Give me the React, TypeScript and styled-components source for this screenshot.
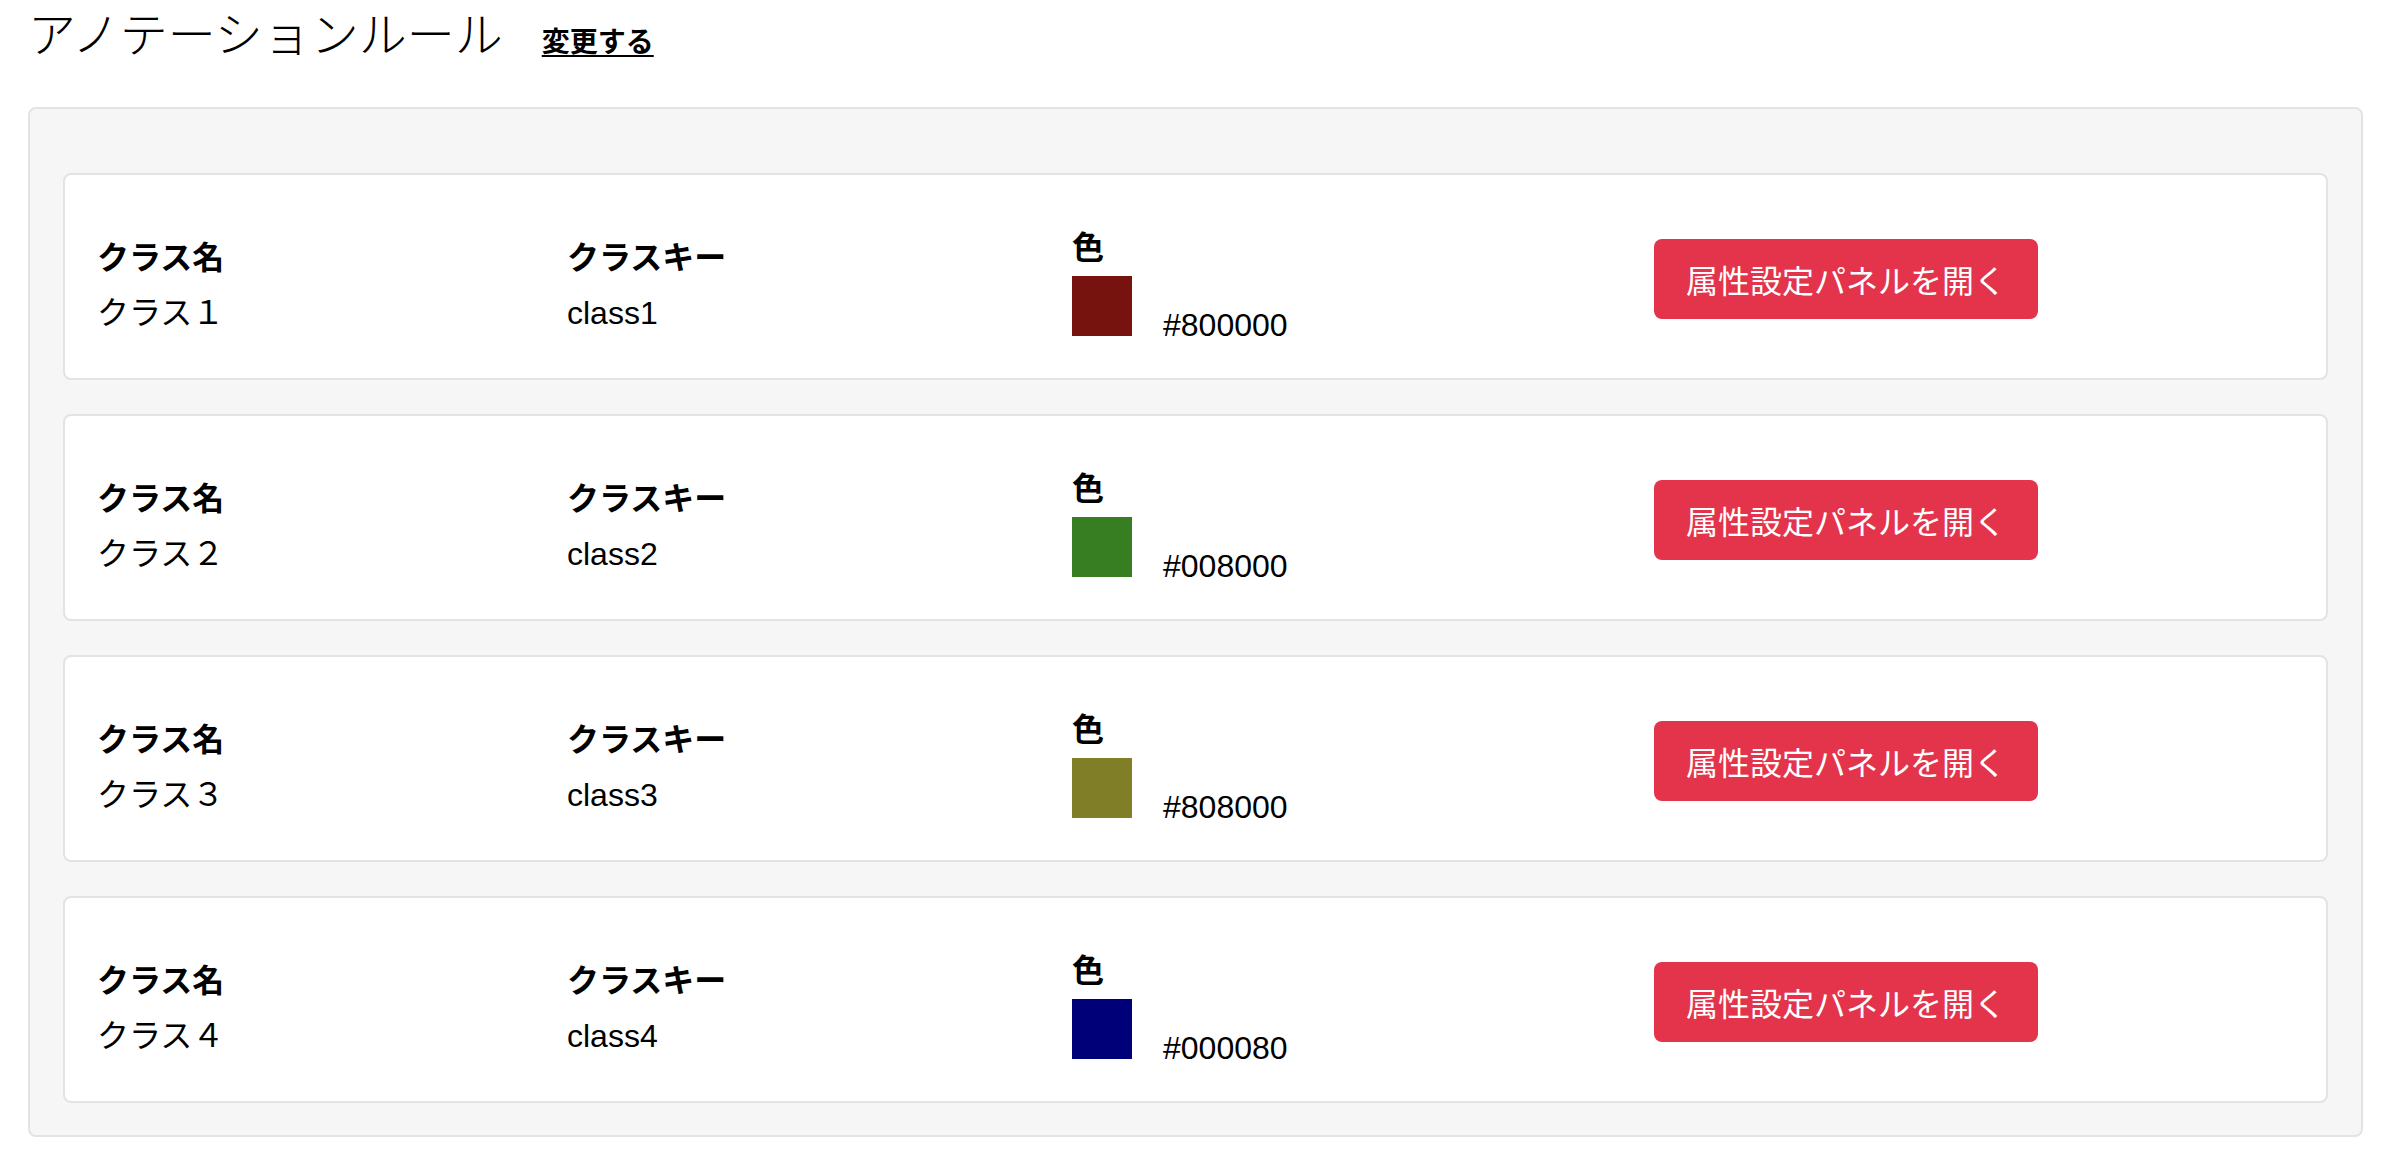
import React from "react";
import styled, { createGlobalStyle } from "styled-components";

const GlobalStyle = createGlobalStyle`
  html, body {
    margin: 0;
    padding: 0;
    background: #ffffff;
    color: #000000;
    font-family: "Liberation Sans", "Noto Sans CJK JP", sans-serif;
  }
`;

const Page = styled.div`
  padding: 3px 31px 0 28px;
`;

const Header = styled.div`
  display: flex;
  align-items: baseline;
  height: 57.6px;
`;

const Title = styled.h1`
  margin: 0;
  font-family: "Noto Sans CJK JP", sans-serif;
  font-weight: 300;
  font-size: 48px;
  line-height: 1.2;
`;

const ChangeLink = styled.a`
  margin-left: 39px;
  font-family: "Noto Sans CJK JP", sans-serif;
  font-weight: 700;
  font-size: 28px;
  color: #000000;
  text-decoration: underline;
  text-underline-offset: 3px;
  cursor: pointer;
`;

const Panel = styled.section`
  margin-top: 46px;
  background: #f6f6f6;
  border: 2px solid #e3e3e3;
  border-radius: 8px;
  padding: 64px 33px 32px 33px;
  display: flex;
  flex-direction: column;
  gap: 34px;
`;

const Card = styled.div`
  box-sizing: border-box;
  height: 207px;
  background: #ffffff;
  border: 2px solid #e3e3e3;
  border-radius: 8px;
  padding: 0 32px;
  display: grid;
  grid-template-columns: 470px 505px 582px auto;
  align-items: start;
`;

const Field = styled.div<{ $top: number }>`
  margin-top: ${(p) => p.$top}px;
  font-size: 32px;
  line-height: 48px;
`;

const Label = styled.div`
  font-family: "Noto Sans CJK JP", sans-serif;
  font-weight: 700;
`;

const Value = styled.div`
  margin-top: 9.5px;
`;

const SwatchRow = styled.div`
  margin-top: 7px;
  display: flex;
  align-items: baseline;
  gap: 31px;
  line-height: 1;
`;

const Swatch = styled.div<{ $color: string }>`
  width: 60px;
  height: 60px;
  background: ${(p) => p.$color};
`;

const OpenButton = styled.button`
  margin-top: 64px;
  width: 384px;
  height: 80px;
  border: none;
  border-radius: 8px;
  background: #e4344b;
  color: #ffffff;
  font-family: "Noto Sans CJK JP", sans-serif;
  font-size: 32px;
  line-height: 1;
  padding: 0;
  cursor: pointer;
`;

type Rule = { name: string; key: string; hex: string; shown: string };

const rules: Rule[] = [
  { name: "クラス１", key: "class1", hex: "#800000", shown: "#77130e" },
  { name: "クラス２", key: "class2", hex: "#008000", shown: "#377d21" },
  { name: "クラス３", key: "class3", hex: "#808000", shown: "#807f27" },
  { name: "クラス４", key: "class4", hex: "#000080", shown: "#000078" },
];

export default function App() {
  return (
    <Page>
      <GlobalStyle />
      <Header>
        <Title>アノテーションルール</Title>
        <ChangeLink>変更する</ChangeLink>
      </Header>
      <Panel>
        {rules.map((r) => (
          <Card key={r.key}>
            <Field $top={56.5}>
              <Label>クラス名</Label>
              <Value>{r.name}</Value>
            </Field>
            <Field $top={56.5}>
              <Label>クラスキー</Label>
              <Value>{r.key}</Value>
            </Field>
            <Field $top={46}>
              <Label>色</Label>
              <SwatchRow>
                <Swatch $color={r.shown} />
                <span>{r.hex}</span>
              </SwatchRow>
            </Field>
            <div>
              <OpenButton>属性設定パネルを開く</OpenButton>
            </div>
          </Card>
        ))}
      </Panel>
    </Page>
  );
}
